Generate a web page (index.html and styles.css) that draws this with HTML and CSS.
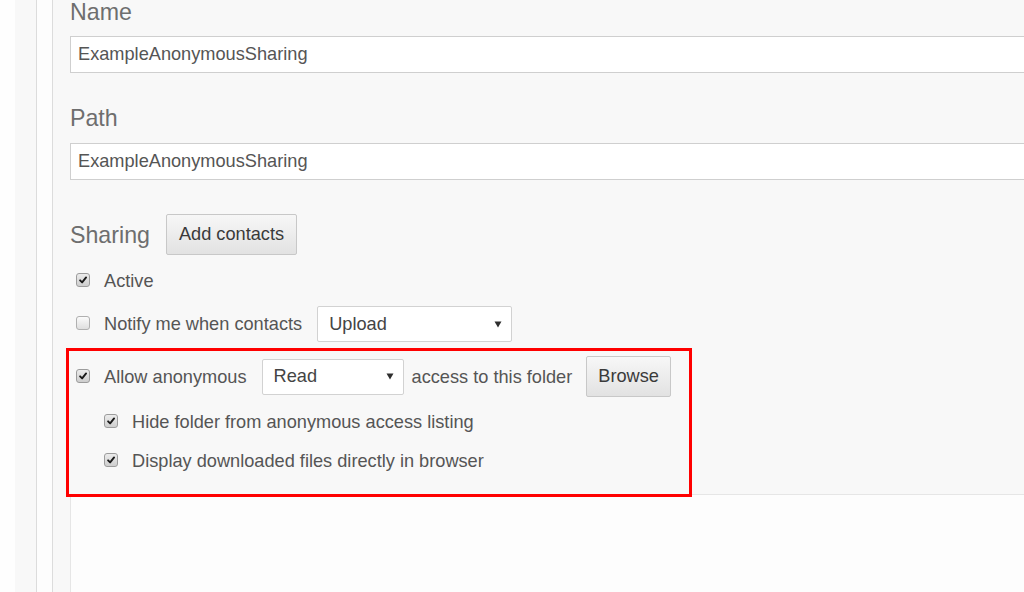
FILE: index.html
```html
<!DOCTYPE html>
<html lang="en">
<head>
  <meta charset="UTF-8" />
  <meta name="viewport" content="width=device-width, initial-scale=1.0"/>
  <title>Folder settings</title>
  <link rel="stylesheet" href="styles.css">
</head>
<body>
  <div class="shell">
    <div class="rail-edge"></div>
    <div class="rail"></div>
    <div class="rail-gap"></div>

    <main class="panel">
      <form class="folder-form">
        <div class="field field-first">
          <label class="field-label">Name</label>
          <input class="text-input" type="text" value="ExampleAnonymousSharing" />
        </div>

        <div class="field">
          <label class="field-label">Path</label>
          <input class="text-input" type="text" value="ExampleAnonymousSharing" />
        </div>

        <div class="sharing-head">
          <span class="field-label">Sharing</span>
          <button type="button" class="btn">Add contacts</button>
        </div>

        <div class="check-row row-active">
          <span class="check is-checked">
            <svg viewBox="0 0 14 14" width="14" height="14"><path d="M3.6 7.4 L6 9.8 L10.6 4" /></svg>
          </span>
          <span class="check-text">Active</span>
        </div>

        <div class="check-row row-notify">
          <span class="check"></span>
          <span class="check-text">Notify me when contacts</span>
          <div class="select select-upload">
            <span>Upload</span>
            <svg class="caret" viewBox="0 0 8 7" width="8" height="7"><path d="M0.5 0.5 H7.5 L4 6.5 Z" /></svg>
          </div>
        </div>

        <!-- anonymous access block, outlined in red -->
        <div class="highlight">
          <div class="check-row row-anon">
            <span class="check is-checked">
              <svg viewBox="0 0 14 14" width="14" height="14"><path d="M3.6 7.4 L6 9.8 L10.6 4" /></svg>
            </span>
            <span class="check-text">Allow anonymous</span>
            <div class="select select-read">
              <span>Read</span>
              <svg class="caret" viewBox="0 0 8 7" width="8" height="7"><path d="M0.5 0.5 H7.5 L4 6.5 Z" /></svg>
            </div>
            <span class="check-text text-after">access to this folder</span>
            <button type="button" class="btn btn-browse">Browse</button>
          </div>

          <div class="check-row sub-row">
            <span class="check is-checked">
              <svg viewBox="0 0 14 14" width="14" height="14"><path d="M3.6 7.4 L6 9.8 L10.6 4" /></svg>
            </span>
            <span class="check-text">Hide folder from anonymous access listing</span>
          </div>

          <div class="check-row sub-row">
            <span class="check is-checked">
              <svg viewBox="0 0 14 14" width="14" height="14"><path d="M3.6 7.4 L6 9.8 L10.6 4" /></svg>
            </span>
            <span class="check-text">Display downloaded files directly in browser</span>
          </div>
        </div>
      </form>

      <div class="panel-foot"></div>
    </main>
  </div>
</body>
</html>
```

FILE: styles.css
```css
* {
  margin: 0;
  padding: 0;
  box-sizing: border-box;
  font-family: "Liberation Sans", Arial, sans-serif;
}

html, body {
  height: 100%;
  overflow: hidden;
  background-color: #fefefe;
}

.shell {
  display: flex;
  height: 100vh;
}

/* left side rails */
.rail-edge {
  width: 15px;
  background-color: #fefefe;
}

.rail {
  width: 22px;
  background-color: #f8f8f8;
  border-right: 1px solid #dcdcdc;
}

.rail-gap {
  width: 16px;
  background-color: #fdfdfd;
  border-right: 1px solid #dcdcdc;
}

.panel {
  flex: 1;
  display: flex;
  flex-direction: column;
  background-color: #f8f8f8;
  overflow: hidden;
}

.folder-form {
  padding-left: 17px;
}

.field {
  margin-top: 32px;
}

.field .field-label {
  margin-bottom: 12px;
}

.field-first {
  margin-top: -1px;
}

.field-first .field-label {
  margin-bottom: 11px;
}

.field-label {
  display: block;
  font-size: 23.2px;
  line-height: 26px;
  color: #6e6e6e;
}

.text-input {
  display: block;
  width: 1000px;
  height: 37px;
  padding: 0 7px;
  border: 1px solid #cfcfcf;
  background-color: #fff;
  font-size: 18.2px;
  color: #555;
  outline: none;
}

.sharing-head {
  display: flex;
  align-items: center;
  gap: 16px;
  margin-top: 34px;
}

.btn {
  height: 41px;
  padding: 0 12px;
  border: 1px solid #c8c8c8;
  border-radius: 2px;
  background: linear-gradient(#f7f7f7, #e2e2e2);
  font-size: 18.2px;
  color: #3a3a3a;
  cursor: pointer;
}

/* checkbox rows */
.check-row {
  display: flex;
  align-items: center;
  padding-left: 6px;
}

.row-active {
  height: 26px;
  margin-top: 13px;
}

.row-notify {
  height: 36px;
  margin-top: 12px;
}

.check {
  width: 14px;
  height: 14px;
  margin-right: 14px;
  margin-bottom: 2px;
  border: 1px solid #b0b0b0;
  border-radius: 3px;
  background: linear-gradient(#fbfbfb, #dedede);
  display: flex;
  align-items: center;
  justify-content: center;
}

.check.is-checked {
  border-color: #9c9c9c;
  background: linear-gradient(#ececec, #cecece);
}

.check svg path {
  fill: none;
  stroke: #1a1a1a;
  stroke-width: 2.2;
  stroke-linecap: round;
  stroke-linejoin: round;
}

.check-text {
  font-size: 18.2px;
  line-height: 26px;
  color: #555;
  white-space: nowrap;
}

.select {
  display: flex;
  align-items: center;
  justify-content: space-between;
  height: 36px;
  margin-left: 15px;
  padding: 0 9px 0 11px;
  border: 1px solid #d2d2d2;
  border-radius: 2px;
  background-color: #fff;
  font-size: 18.2px;
  color: #444;
}

.select-upload {
  width: 195px;
}

.select-read {
  width: 142px;
}

.caret path {
  fill: #2e2e2e;
}

.text-after {
  margin-left: 8px;
}

.btn-browse {
  margin-left: 14px;
  padding: 0 11px;
}

/* red outline round the anonymous access options */
.highlight {
  position: relative;
  z-index: 1;
  width: 626px;
  margin: 6px 0 -3px -4px;
  padding: 5px 0 20px 7px;
  border: 3px solid #ff0000;
}

.highlight .check-row {
  padding-left: 0;
}

.row-anon {
  height: 41px;
}

.highlight .sub-row {
  height: 26px;
  margin-top: 12px;
  padding-left: 28px;
}

.highlight .sub-row + .sub-row {
  margin-top: 13px;
}

.panel-foot {
  flex: 1;
  margin-left: 17px;
  border-top: 1px solid #e6e6e6;
  border-left: 1px solid #e6e6e6;
  background-color: #fdfdfd;
}
```
